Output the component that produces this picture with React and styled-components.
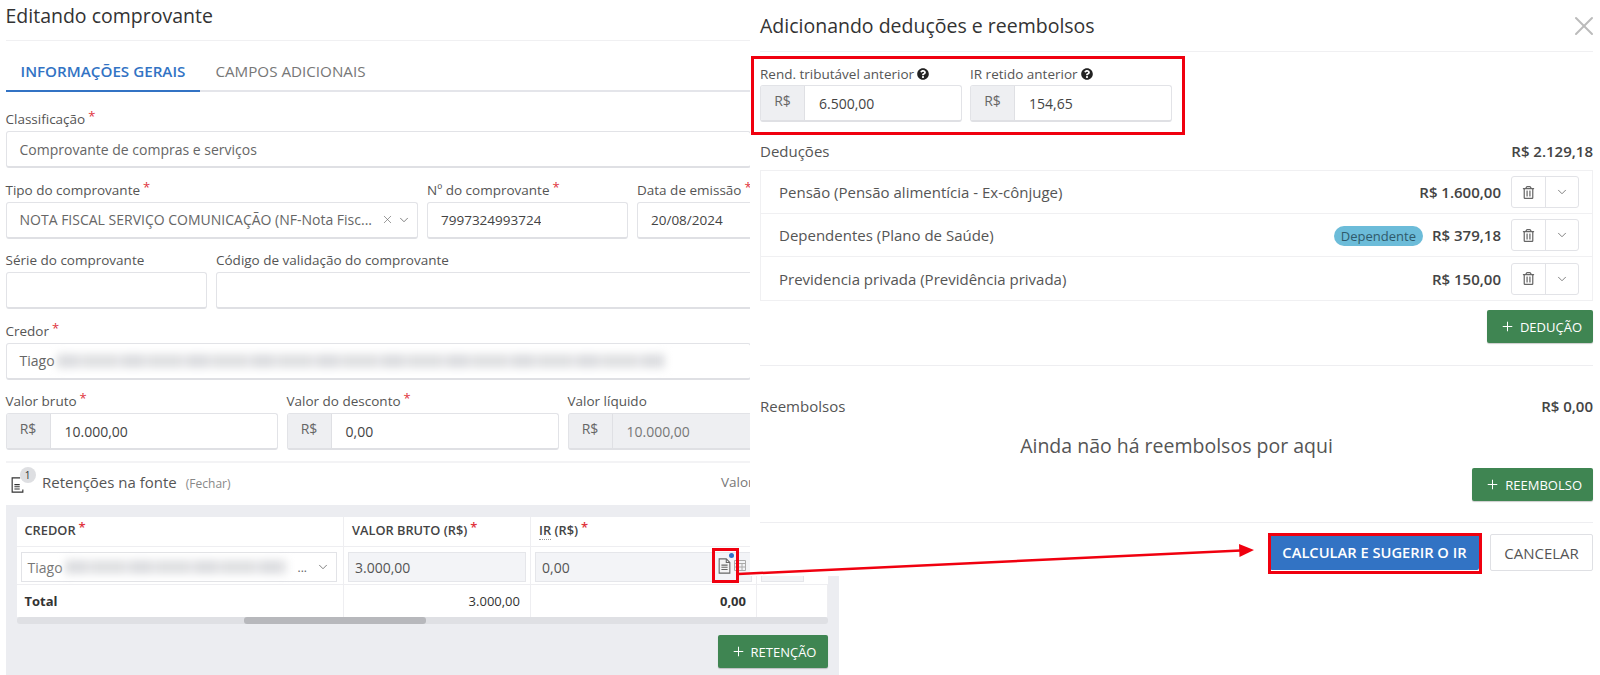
import styled, { createGlobalStyle } from 'styled-components'
import { ChevronDown, Plus, X } from 'lucide-react'
import { FaQuestionCircle, FaRegTrashAlt } from 'react-icons/fa'

const GlobalStyle = createGlobalStyle`
  html, body { margin: 0; padding: 0; background: #fff; }
  * { box-sizing: border-box; }
  body { font-family: "Open Sans", "Liberation Sans", sans-serif; color: #444; }
`

const deductions = [
  { name: 'Pensão (Pensão alimentícia - Ex-cônjuge)', value: 'R$ 1.600,00' },
  { name: 'Dependentes (Plano de Saúde)', value: 'R$ 379,18', badge: 'Dependente' },
  { name: 'Previdencia privada (Previdência privada)', value: 'R$ 150,00' },
]

const Label = ({ children, required }) => (
  <FieldLabel>
    {children}
    {required && <Req>*</Req>}
  </FieldLabel>
)

const Money = ({ value, disabled }) => (
  <InputBox $disabled={disabled}>
    <Addon>R$</Addon>
    <MoneyValue>{value}</MoneyValue>
  </InputBox>
)

const DocIcon = () => (
  <svg width="13" height="16" viewBox="0 0 14 18" fill="none" stroke="#666" strokeWidth="1.2">
    <path d="M1 1h8l4 4v12H1z" fill="#f4f4f5" />
    <path d="M9 1v4h4" />
    <path d="M3.5 8h7M3.5 10.5h7M3.5 13h7" />
  </svg>
)

const App = () => {
  return (
    <Page>
      <GlobalStyle />
      <LeftColumn>
        <LeftInner>
          <LeftTitle>Editando comprovante</LeftTitle>
          <Tabs>
            <Tab $active>INFORMAÇÕES GERAIS</Tab>
            <Tab>CAMPOS ADICIONAIS</Tab>
          </Tabs>
          <Form>
            <FieldRow $cols="745px">
              <div>
                <Label required>Classificação</Label>
                <InputBox><PlainValue $muted>Comprovante de compras e serviços</PlainValue></InputBox>
              </div>
            </FieldRow>
            <FieldRow $cols="412.5px 201px 200px">
              <div>
                <Label required>Tipo do comprovante</Label>
                <InputBox>
                  <PlainValue $muted>NOTA FISCAL SERVIÇO COMUNICAÇÃO (NF-Nota Fisc...</PlainValue>
                  <SelectIcons>
                    <X size={13} strokeWidth={1.2} />
                    <ChevronDown size={14} strokeWidth={1.4} />
                  </SelectIcons>
                </InputBox>
              </div>
              <div>
                <Label required>Nº do comprovante</Label>
                <InputBox><PlainValue>7997324993724</PlainValue></InputBox>
              </div>
              <div>
                <Label required>Data de emissão</Label>
                <InputBox><PlainValue>20/08/2024</PlainValue></InputBox>
              </div>
            </FieldRow>
            <FieldRow $cols="201.5px 600px">
              <div>
                <Label>Série do comprovante</Label>
                <InputBox />
              </div>
              <div>
                <Label>Código de validação do comprovante</Label>
                <InputBox />
              </div>
            </FieldRow>
            <FieldRow $cols="745px">
              <div>
                <Label required>Credor</Label>
                <InputBox>
                  <PlainValue $muted>Tiago</PlainValue>
                  <Blurred $width="608px" />
                </InputBox>
              </div>
            </FieldRow>
            <FieldRow $gap="9px" $cols="272px 272px 272px">
              <div>
                <Label required>Valor bruto</Label>
                <Money value="10.000,00" />
              </div>
              <div>
                <Label required>Valor do desconto</Label>
                <Money value="0,00" />
              </div>
              <div>
                <Label>Valor líquido</Label>
                <Money value="10.000,00" disabled />
              </div>
            </FieldRow>
          </Form>
          <RetentionHeader>
            <RetentionIcon>
              <svg width="13" height="16" viewBox="0 0 14 18" fill="none" stroke="#333" strokeWidth="1.3">
                <path d="M10 1H1v16h12v-3" />
                <path d="M3.5 8.5h6M3.5 11h6M3.5 13.5h6" />
              </svg>
              <CountBadge>1</CountBadge>
            </RetentionIcon>
            <RetentionTitle>Retenções na fonte</RetentionTitle>
            <CloseLink>(Fechar)</CloseLink>
            <RetentionValue>Valor</RetentionValue>
          </RetentionHeader>
          <GrayBlock>
            <TableWrap>
              <HeadCell>CREDOR<Req>*</Req></HeadCell>
              <HeadCell>VALOR BRUTO (R$)<Req>*</Req></HeadCell>
              <HeadCell><Dotted>IR</Dotted> (R$)<Req>*</Req></HeadCell>
              <HeadCell />

              <BodyCell>
                <CellSelect>
                  <CellName>Tiago</CellName>
                  <Blurred $width="222px" />
                  <Dots>...</Dots>
                  <ChevronDown size={14} strokeWidth={1.4} />
                </CellSelect>
              </BodyCell>
              <BodyCell>
                <CellInput>3.000,00</CellInput>
              </BodyCell>
              <BodyCell>
                <CellInput>
                  0,00
                  <CellIcons>
                    <NoteIcon>
                      <DocIcon />
                      <BlueDot />
                    </NoteIcon>
                    <CalcIcon>
                      <svg width="12" height="11" viewBox="0 0 12 11" fill="none" stroke="#aaa" strokeWidth="1">
                        <path d="M.5.5h11v10H.5zM.5 3.5h11M.5 7h11M4 3.5v7M8 3.5v7" />
                      </svg>
                    </CalcIcon>
                  </CellIcons>
                </CellInput>
              </BodyCell>
              <BodyCell $noRight><CellInput $short /></BodyCell>

              <TotalCell>Total</TotalCell>
              <TotalCell $right $normal>3.000,00</TotalCell>
              <TotalCell $right>0,00</TotalCell>
              <TotalCell />
            </TableWrap>
            <ScrollTrack><ScrollThumb /></ScrollTrack>
            <GrayFooter>
              <GreenButton><Plus size={15} strokeWidth={1.6} />RETENÇÃO</GreenButton>
            </GrayFooter>
          </GrayBlock>
        </LeftInner>
      </LeftColumn>

      <RightPanel>
        <PanelHead>
          <PanelTitle>Adicionando deduções e reembolsos</PanelTitle>
          <CloseBtn><X size={32} strokeWidth={1.5} /></CloseBtn>
        </PanelHead>
        <PriorRow>
          <div>
            <PriorLabel>Rend. tributável anterior <FaQuestionCircle size={12} color="#222" /></PriorLabel>
            <Money value="6.500,00" />
          </div>
          <div>
            <PriorLabel>IR retido anterior <FaQuestionCircle size={12} color="#222" /></PriorLabel>
            <Money value="154,65" />
          </div>
        </PriorRow>
        <SectionHead $top="19px">
          <span>Deduções</span>
          <SectionValue>R$ 2.129,18</SectionValue>
        </SectionHead>
        <DeductionList>
          {deductions.map((item) => (
            <DeductionRow key={item.name}>
              <DeductionName>{item.name}</DeductionName>
              {item.badge && <Badge>{item.badge}</Badge>}
              <DeductionValue>{item.value}</DeductionValue>
              <RowActions>
                <ActionBtn><FaRegTrashAlt size={13} color="#666" /></ActionBtn>
                <ActionBtn><ChevronDown size={14} strokeWidth={1.4} color="#666" /></ActionBtn>
              </RowActions>
            </DeductionRow>
          ))}
        </DeductionList>
        <ButtonLine $top="9px">
          <GreenButton><Plus size={15} strokeWidth={1.6} />DEDUÇÃO</GreenButton>
        </ButtonLine>
        <Rule $top="22px" />
        <SectionHead $top="30px">
          <span>Reembolsos</span>
          <SectionValue>R$ 0,00</SectionValue>
        </SectionHead>
        <EmptyText>Ainda não há reembolsos por aqui</EmptyText>
        <ButtonLine $top="10px">
          <GreenButton><Plus size={15} strokeWidth={1.6} />REEMBOLSO</GreenButton>
        </ButtonLine>
        <Rule $top="21px" />
        <PanelFooter>
          <BlueButton>CALCULAR E SUGERIR O IR</BlueButton>
          <GhostButton>CANCELAR</GhostButton>
        </PanelFooter>
      </RightPanel>

      <Marks viewBox="0 0 1600 675" width="1600" height="675">
        <g fill="none" stroke="#f0000f" strokeWidth="3">
          <rect x="752.5" y="57.5" width="431" height="76" />
          <rect x="1269.5" y="534.5" width="211" height="38" />
          <rect x="713.5" y="549.5" width="24" height="32" />
        </g>
        <line x1="738" y1="574" x2="1241" y2="550.5" stroke="#f0000f" strokeWidth="2.5" />
        <path d="M1254 550l-15-6 .5 13z" fill="#f0000f" />
      </Marks>
    </Page>
  )
}

export default App

const Page = styled.div`
  position: relative;
  display: flex;
  width: 1600px;
  height: 675px;
  overflow: hidden;
`
const LeftColumn = styled.div`
  width: 750px;
  flex: none;
`
const LeftInner = styled.div`
  width: 839px;
  padding-left: 5.5px;
`
const LeftTitle = styled.div`
  height: 41px;
  width: 744.5px;
  padding-top: 4px;
  font-size: 19.5px;
  line-height: 24px;
  color: #333;
  border-bottom: 1px solid #f0f0f2;
`
const Tabs = styled.div`
  display: flex;
  height: 51px;
  width: 744.5px;
  border-bottom: 2px solid #e4e5ea;
`
const Tab = styled.div`
  height: 51px;
  padding: 20px 15px 0;
  font-size: 15.2px;
  line-height: 20px;
  font-weight: ${(p) => (p.$active ? 600 : 400)};
  color: ${(p) => (p.$active ? '#3273c4' : '#777')};
  border-bottom: 2px solid ${(p) => (p.$active ? '#3273c4' : 'transparent')};
`
const Form = styled.div`
  display: flex;
  flex-direction: column;
  gap: 11.5px;
  margin-top: 17px;
`
const FieldRow = styled.div`
  display: grid;
  grid-template-columns: ${(p) => p.$cols};
  gap: ${(p) => p.$gap || '9px'};
`
const FieldLabel = styled.div`
  height: 22px;
  font-size: 13.5px;
  line-height: 20px;
  color: #555;
  white-space: nowrap;
`
const Req = styled.span`
  color: #e0333c;
  font-size: 13px;
  margin-left: 3px;
  position: relative;
  top: -3px;
`
const InputBox = styled.div`
  display: flex;
  align-items: center;
  height: 37px;
  border: 1px solid #e2e3e7;
  border-bottom: 2px solid #dfe0e4;
  border-radius: 3px;
  background: ${(p) => (p.$disabled ? '#eeeff2' : '#fff')};
  color: ${(p) => (p.$disabled ? '#777' : '#444')};
  overflow: hidden;
`
const Addon = styled.div`
  flex: none;
  width: 44px;
  height: 100%;
  padding-top: 5px;
  text-align: center;
  font-size: 14px;
  line-height: 20px;
  color: #666;
  background: #eeeff2;
  border-right: 1px solid #dfe0e4;
`
const MoneyValue = styled.div`
  padding: 1px 0 0 14px;
  font-size: 14px;
`
const PlainValue = styled.div`
  padding-left: 13px;
  font-size: ${(p) => (p.$muted ? '14px' : '13.5px')};
  color: ${(p) => (p.$muted ? '#666' : '#444')};
  white-space: nowrap;
  overflow: hidden;
`
const SelectIcons = styled.div`
  display: flex;
  align-items: center;
  gap: 3px;
  margin-left: auto;
  padding: 0 6px 0 0;
  color: #666;
`
const Blurred = styled.div`
  flex: none;
  width: ${(p) => p.$width};
  height: 14px;
  margin-left: 2px;
  background: repeating-linear-gradient(90deg, #dcdde0 0 22px, #eaeaec 22px 26px, #dfe0e2 26px 60px, #eaeaec 60px 65px);
  filter: blur(4px);
`
const RetentionHeader = styled.div`
  display: flex;
  align-items: center;
  height: 44px;
  margin-top: 11px;
  border-top: 2px solid #f3f3f5;
  padding-bottom: 4px;
`
const RetentionIcon = styled.div`
  position: relative;
  display: flex;
  width: 36.5px;
  padding: 6px 0 0 5px;
`
const CountBadge = styled.span`
  position: absolute;
  left: 14px;
  top: -4px;
  width: 16px;
  height: 16px;
  border-radius: 50%;
  background: #dedfe2;
  font-size: 10px;
  line-height: 16px;
  text-align: center;
  color: #333;
`
const RetentionTitle = styled.div`
  font-size: 15px;
  color: #555;
`
const CloseLink = styled.div`
  margin-left: 9px;
  padding-top: 2px;
  font-size: 12px;
  color: #888;
`
const RetentionValue = styled.div`
  position: absolute;
  left: 721px;
  font-size: 13.5px;
  color: #777;
`
const GrayBlock = styled.div`
  width: 833px;
  height: 180px;
  padding: 12px 11px 0;
  background: #ecedf1;
`
const TableWrap = styled.div`
  display: grid;
  grid-template-columns: 327.5px 187px 226px 70.5px;
  grid-template-rows: 30px 38px 32px;
  background: #fff;
`
const HeadCell = styled.div`
  padding: 1px 8px 0;
  font-size: 12.8px;
  line-height: 24px;
  font-weight: 600;
  color: #444;
  border-right: 1px solid #eeeef1;
  border-bottom: 1px solid #eeeef1;
  white-space: nowrap;
`
const Dotted = styled.span`
  border-bottom: 1px dotted #999;
`
const BodyCell = styled.div`
  padding: 5px 4px 3px;
  border-right: ${(p) => (p.$noRight ? 'none' : '1px solid #eeeef1')};
  border-bottom: 1px solid #eeeef1;
`
const CellSelect = styled.div`
  display: flex;
  align-items: center;
  height: 30px;
  margin: 0 2px 0 0;
  padding: 0 6px;
  border: 1px solid #e2e3e7;
  color: #666;
`
const CellName = styled.span`
  font-size: 14px;
  color: #777;
`
const Dots = styled.span`
  margin: 0 9px 0 auto;
  font-size: 12px;
`
const CellInput = styled.div`
  position: relative;
  display: flex;
  align-items: center;
  height: 30px;
  width: ${(p) => (p.$short ? '43px' : 'auto')};
  padding-left: 6px;
  font-size: 14px;
  color: #555;
  background: #f3f4f7;
  border: 1px solid #e5e6ea;
`
const CellIcons = styled.div`
  position: absolute;
  left: 182px;
  top: 0;
  display: flex;
  align-items: flex-end;
  gap: 3px;
`
const NoteIcon = styled.div`
  position: relative;
  display: flex;
  padding-top: 5px;
`
const BlueDot = styled.span`
  position: absolute;
  right: -3px;
  top: 0;
  width: 5px;
  height: 5px;
  border-radius: 50%;
  background: #2f6fc6;
`
const CalcIcon = styled.div`
  display: flex;
  padding-bottom: 3px;
`
const TotalCell = styled.div`
  padding: 0 10px 0 8px;
  font-size: 13px;
  line-height: 32px;
  font-weight: ${(p) => (p.$normal ? 400 : 700)};
  color: #333;
  text-align: ${(p) => (p.$right ? 'right' : 'left')};
  border-right: 1px solid #eeeef1;
`
const ScrollTrack = styled.div`
  width: 811px;
  height: 7px;
  border-radius: 3px;
  background: #dfe0e4;
  padding-left: 227px;
`
const ScrollThumb = styled.div`
  width: 182px;
  height: 7px;
  border-radius: 3px;
  background: #b7b8bc;
`
const GrayFooter = styled.div`
  display: flex;
  justify-content: flex-end;
  width: 811px;
  margin-top: 11px;
`
const GreenButton = styled.button`
  display: inline-flex;
  align-items: center;
  gap: 5px;
  height: 33px;
  padding: 0 11px 0 13px;
  border: none;
  border-radius: 2px;
  background: #3f8552;
  color: #fff;
  font-family: inherit;
  font-size: 13px;
  box-shadow: 0 1px 1px rgba(0, 0, 0, 0.2);
`
const RightPanel = styled.div`
  position: relative;
  z-index: 1;
  width: 850px;
  height: 576px;
  flex: none;
  padding: 0 7px 0 10px;
  background: #fff;
`
const PanelHead = styled.div`
  display: flex;
  align-items: center;
  justify-content: space-between;
  height: 52px;
  border-bottom: 1px solid #f0f0f2;
`
const PanelTitle = styled.div`
  font-size: 19.5px;
  color: #333;
`
const CloseBtn = styled.div`
  display: flex;
  color: #bbb;
  margin-right: -7px;
`
const PriorRow = styled.div`
  display: grid;
  grid-template-columns: 202px 202px;
  gap: 8px;
  margin-top: 11px;
`
const PriorLabel = styled.div`
  display: flex;
  align-items: center;
  gap: 3px;
  height: 22px;
  font-size: 13.5px;
  color: #555;
`
const SectionHead = styled.div`
  display: flex;
  justify-content: space-between;
  margin-top: ${(p) => p.$top};
  font-size: 15px;
  line-height: 20px;
  color: #555;
`
const SectionValue = styled.span`
  font-weight: 600;
  color: #444;
`
const DeductionList = styled.div`
  margin-top: 9px;
  border: 1px solid #f0f0f2;
`
const DeductionRow = styled.div`
  display: flex;
  align-items: center;
  height: 43px;
  padding: 0 13px 0 18px;
  border-bottom: 1px solid #f0f0f2;
  &:last-child { border-bottom: none; }
`
const DeductionName = styled.div`
  margin-right: auto;
  font-size: 15px;
  color: #555;
`
const Badge = styled.span`
  height: 20px;
  margin: 2px 9px 0 0;
  padding: 0 7px;
  border-radius: 10px;
  background: #6cbcd9;
  font-size: 13px;
  line-height: 20px;
  color: #2f5a6b;
`
const DeductionValue = styled.div`
  font-size: 15px;
  font-weight: 600;
  color: #444;
`
const RowActions = styled.div`
  display: flex;
  height: 32px;
  margin-left: 10px;
  border: 1px solid #e2e3e7;
  border-radius: 3px;
`
const ActionBtn = styled.div`
  display: flex;
  align-items: center;
  justify-content: center;
  width: 33px;
  & + & { border-left: 1px solid #e2e3e7; }
`
const ButtonLine = styled.div`
  display: flex;
  justify-content: flex-end;
  margin-top: ${(p) => p.$top};
`
const Rule = styled.div`
  height: 1px;
  margin-top: ${(p) => p.$top};
  background: #eeeef1;
`
const EmptyText = styled.div`
  margin-top: 18px;
  text-align: center;
  font-size: 19.5px;
  line-height: 24px;
  color: #555;
`
const PanelFooter = styled.div`
  display: flex;
  justify-content: flex-end;
  gap: 11px;
  margin-top: 11px;
`
const BlueButton = styled.button`
  width: 209px;
  height: 36px;
  border: none;
  border-radius: 2px;
  background: #3273c4;
  color: #fff;
  font-family: inherit;
  font-size: 14.7px;
  font-weight: 600;
  white-space: nowrap;
`
const GhostButton = styled.button`
  width: 103px;
  height: 37px;
  border: 1px solid #dfe0e4;
  border-radius: 2px;
  background: #fff;
  color: #555;
  font-family: inherit;
  font-size: 15px;
`
const Marks = styled.svg`
  position: absolute;
  left: 0;
  top: 0;
  z-index: 2;
  pointer-events: none;
`
